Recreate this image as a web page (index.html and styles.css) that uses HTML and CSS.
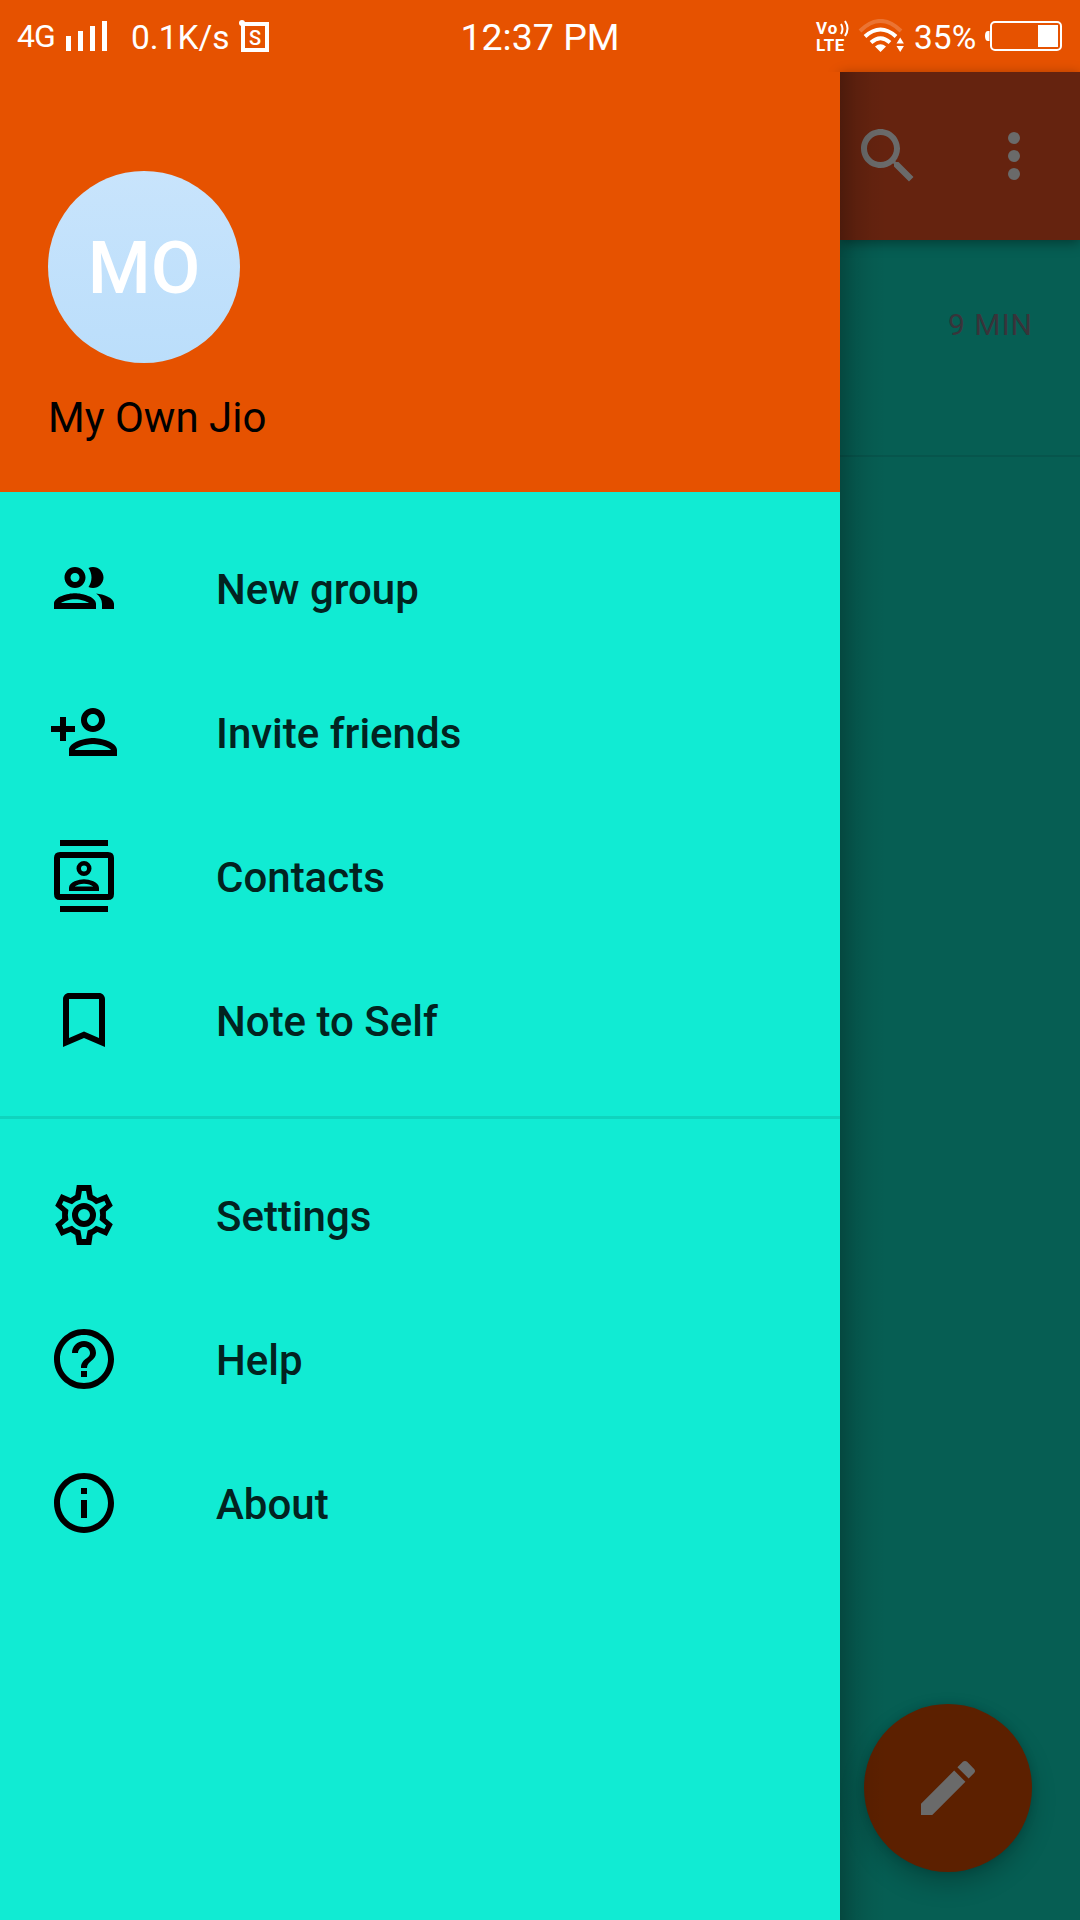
FILE: index.html
```html
<!DOCTYPE html>
<html lang="en">
<head>
<meta charset="utf-8">
<title>Messages</title>
<link rel="stylesheet" href="styles.css">
</head>
<body>
<div class="screen">
  <header class="status">
    <div class="status-left">
      <span class="network">4G</span>
      <svg class="signal" width="42" height="30" viewBox="0 0 42 30"><path d="M0 15h5v15H0zM12 10h5v20h-5zM24 5h5v25h-5zM36 0h5v30h-5z"/></svg>
      <span class="speed">0.1K/s</span>
      <svg class="sim" width="30" height="32" viewBox="0 0 30 32"><path fill-rule="evenodd" d="M2 2h28v30H2zM6 6v22h20V6z"/><circle cx="3" cy="3" r="3"/><text x="16" y="24.500" text-anchor="middle" font-size="20" font-weight="500">S</text></svg>
    </div>
    <span class="clock">12:37 PM</span>
    <div class="status-right">
      <div class="volte">
        <div class="volte-row"><span>Vo</span><svg width="9" height="17" viewBox="0 0 9 17"><path fill="none" stroke="#fff" stroke-width="2" d="M1 4q3 5 0 10M5 1q5 7.500 0 15"/></svg></div>
        <div class="volte-lte">LTE</div>
      </div>
      <svg class="wifi" width="46" height="34" viewBox="0 0 46 34"><g fill="none" stroke="#fff"><path d="M2 12Q22.500-8 43 12" stroke-width="4" opacity=".2"/><path d="M7 17.500Q22.500 3.500 38 17.500" stroke-width="4"/><path d="M13 23.500Q22.500 15 32 23.500" stroke-width="4"/></g><path d="M17 27.500q5.500-4.500 11 0l-5.500 5.500zM38.500 24.500l3.700-6 3.700 6zM38.500 27h7.400l-3.700 6z"/></svg>
      <span class="percent">35%</span>
      <svg class="battery" width="78" height="30" viewBox="0 0 78 30"><path d="M4.500 10H3q-3 0-3 5t3 5h1.500z"/><rect x="6" y="1" width="70" height="28" rx="4" fill="none" stroke="#fff" stroke-width="2"/><path d="M53 4h20v22H53z"/></svg>
    </div>
  </header>
  <main class="body">
    <aside class="drawer">
      <div class="profile">
        <div class="avatar">MO</div>
        <div class="name">My Own Jio</div>
      </div>
      <nav>
        <ul class="menu">
          <li><svg class="icon" viewBox="0 0 24 24"><path d="M9 13.750c-2.340 0-7 1.170-7 3.500V19h14v-1.750c0-2.330-4.660-3.500-7-3.500zM4.340 17c.84-.58 2.870-1.250 4.660-1.250s3.820.67 4.660 1.250H4.340zM9 12c1.930 0 3.500-1.570 3.500-3.500S10.930 5 9 5 5.500 6.570 5.500 8.500 7.070 12 9 12zm0-5c.83 0 1.500.67 1.500 1.500S9.830 10 9 10s-1.500-.67-1.500-1.500S8.170 7 9 7zm7.040 6.810c1.160.84 1.960 1.960 1.960 3.440V19h4v-1.750c0-2.020-3.500-3.170-5.960-3.440zM15 12c1.930 0 3.500-1.570 3.500-3.500S16.930 5 15 5c-.54 0-1.040.13-1.500.35.63.89 1 1.980 1 3.150s-.37 2.260-1 3.150c.46.22.96.35 1.500.35z"/></svg><span>New group</span></li>
          <li><svg class="icon" viewBox="0 0 24 24"><path d="M15 12c2.210 0 4-1.790 4-4s-1.790-4-4-4-4 1.790-4 4 1.790 4 4 4zm0-6c1.100 0 2 .9 2 2s-.9 2-2 2-2-.9-2-2 .9-2 2-2zm0 8c-2.670 0-8 1.340-8 4v2h16v-2c0-2.660-5.330-4-8-4zm-6 4c.22-.72 3.310-2 6-2 2.700 0 5.800 1.290 6 2H9zm-3-3v-3h3v-2H6V7H4v3H1v2h3v3z"/></svg><span>Invite friends</span></li>
          <li><svg class="icon" viewBox="0 0 24 24"><path fill-rule="evenodd" d="M4 0h16v2H4zM4 22h16v2H4zM4 4h16q2 0 2 2v12q0 2-2 2H4q-2 0-2-2V6q0-2 2-2zM4 6v12h16V6zM12 7a2.500 2.500 0 1 0 0 5 2.500 2.500 0 0 0 0-5zm0 1.500a1 1 0 1 1 0 2 1 1 0 0 1 0-2zM7 17v-1c0-2 3.300-2.900 5-2.900s5 .9 5 2.900v1zm1.900-1.500h6.200c-.7-.5-1.900-.9-3.100-.9s-2.400.4-3.100.9z"/></svg><span>Contacts</span></li>
          <li><svg class="icon" viewBox="0 0 24 24"><path d="M17 3H7c-1.100 0-1.990.9-1.990 2L5 21l7-3 7 3V5c0-1.100-.9-2-2-2zm0 15l-5-2.180L7 18V5h10v13z"/></svg><span>Note to Self</span></li>
        </ul>
        <ul class="menu menu-secondary">
          <li><svg class="icon" viewBox="-12 -12 24 24"><path fill-rule="evenodd" d="M-2.400-10H2.400L2.900-6.700 4.500-5.700 7.600-7 9.600-3.100 7.300-1.200V1.200L9.600 3.100 7.600 7 4.500 5.700 2.900 6.700 2.400 10H-2.400L-2.900 6.700-4.500 5.700-7.600 7-9.600 3.100-7.300 1.200V-1.200L-9.600-3.100-7.600-7-4.500-5.700-2.900-6.700zM-.7-8L-1.200-5.200Q-2.800-4.800-4-3.600L-6.800-4.700-7.400-3.500-5.200-1.700Q-5.600 0-5.200 1.700L-7.400 3.500-6.800 4.700-4 3.600Q-2.800 4.800-1.200 5.200L-.7 8H.7L1.200 5.200Q2.800 4.800 4 3.600L6.800 4.700 7.400 3.500 5.200 1.700Q5.600 0 5.200-1.700L7.400-3.500 6.800-4.700 4-3.600Q2.800-4.800 1.200-5.200L.7-8z"/><circle r="3" fill="none" stroke="#000" stroke-width="2"/></svg><span>Settings</span></li>
          <li><svg class="icon" viewBox="0 0 24 24"><path d="M11 18h2v-2h-2v2zm1-16C6.480 2 2 6.480 2 12s4.480 10 10 10 10-4.480 10-10S17.520 2 12 2zm0 18c-4.410 0-8-3.590-8-8s3.590-8 8-8 8 3.590 8 8-3.590 8-8 8zm0-14c-2.210 0-4 1.790-4 4h2c0-1.100.9-2 2-2s2 .9 2 2c0 2-3 1.750-3 5h2c0-2.250 3-2.500 3-5 0-2.210-1.790-4-4-4z"/></svg><span>Help</span></li>
          <li><svg class="icon" viewBox="0 0 24 24"><path d="M11 7h2v2h-2zm0 4h2v6h-2zm1-9C6.480 2 2 6.480 2 12s4.480 10 10 10 10-4.480 10-10S17.520 2 12 2zm0 18c-4.410 0-8-3.590-8-8s3.590-8 8-8 8 3.590 8 8-3.590 8-8 8z"/></svg><span>About</span></li>
        </ul>
      </nav>
    </aside>
    <section class="app">
      <div class="toolbar">
        <svg class="icon" viewBox="0 0 24 24"><path d="M15.500 14h-.79l-.28-.27C15.410 12.590 16 11.110 16 9.500 16 5.910 13.090 3 9.500 3S3 5.910 3 9.500 5.910 16 9.500 16c1.610 0 3.090-.59 4.230-1.570l.27.28v.79l5 4.990L20.490 19l-4.990-5zm-6 0C7.010 14 5 11.990 5 9.500S7.010 5 9.500 5 14 7.010 14 9.500 11.990 14 9.500 14z"/></svg>
        <svg class="icon" viewBox="0 0 24 24"><circle cx="12" cy="6" r="2"/><circle cx="12" cy="12" r="2"/><circle cx="12" cy="18" r="2"/></svg>
      </div>
      <div class="conversation"><span class="time">9 MIN</span></div>
      <div class="fab"><svg class="icon" viewBox="0 0 24 24"><path d="M3 17.250V21h3.750L17.810 9.940l-3.750-3.750L3 17.250zM20.710 7.040c.39-.39.39-1.020 0-1.410l-2.340-2.340c-.39-.39-1.020-.39-1.410 0l-1.830 1.830 3.750 3.750 1.830-1.830z"/></svg></div>
    </section>
  </main>
</div>
</body>
</html>
```
FILE: styles.css
```css
* { box-sizing: border-box; }
body { margin: 0; font-family: Roboto, "Liberation Sans", sans-serif; }
.screen { width: 1080px; height: 1920px; display: flex; flex-direction: column; overflow: hidden; }

.status {
  height: 72px;
  padding: 0 17px;
  display: grid;
  grid-template-columns: 1fr auto 1fr;
  background: #e65200;
  color: #fff;
  line-height: 1;
}
.status svg { fill: #fff; flex: none; }
.status-left, .status-right { display: flex; align-items: flex-start; }
.status-right { justify-content: flex-end; }
.network { font-size: 32px; width: 49px; letter-spacing: -1px; margin-top: 20px; }
.signal { margin-top: 21px; }
.speed { font-size: 33.500px; width: 108px; margin: 21px 0 0 23px; white-space: nowrap; }
.sim { margin-top: 20px; }
.clock { font-size: 37.500px; margin-top: 19px; }
.volte { width: 32px; margin: 20px 10px 0 0; font-weight: 700; font-size: 17px; }
.volte-row { display: flex; gap: 2px; height: 17px; line-height: 17px; letter-spacing: 1px; }
.volte-lte { line-height: 17px; letter-spacing: 0.500px; }
.wifi { margin: 19px 10px 0 0; }
.percent { font-size: 33.500px; width: 61px; margin: 21px 10px 0 0; }
.battery { margin-top: 21px; }

.body { flex: 1; display: flex; }
.drawer { position: relative; z-index: 1; width: 840px; background: #11ebd3; }
.profile { height: 420px; padding: 99px 48px 0; background: #e65200; }
.avatar {
  width: 192px;
  height: 192px;
  border-radius: 50%;
  background: linear-gradient(#c8e4fc, #bbdefb);
  color: #fff;
  font-size: 72px;
  font-weight: 500;
  line-height: 195px;
  text-align: center;
}
.name { margin-top: 30px; font-size: 42px; line-height: 50px; color: #000; }

.menu { list-style: none; margin: 0; padding: 24px 0; }
.menu-secondary { border-top: 3px solid #0fd4be; }
.menu li {
  height: 144px;
  padding-left: 48px;
  display: flex;
  align-items: center;
  gap: 96px;
  font-size: 42px;
  font-weight: 500;
  color: #022320;
}
.menu span { padding-top: 3px; }
.icon { width: 72px; height: 72px; flex: none; display: block; }

.app { position: relative; width: 240px; display: flex; flex-direction: column; background: #065e53; }
/* Shadow cast by the open drawer */
.app::after {
  content: "";
  position: absolute;
  inset: 0;
  background: linear-gradient(90deg, rgba(0,0,0,.24), rgba(0,0,0,.1) 16px, rgba(0,0,0,.03) 32px, transparent 46px);
}
.app .icon { fill: #6a6a6a; }
.toolbar {
  height: 168px;
  padding: 0 30px 0 12px;
  display: flex;
  align-items: center;
  justify-content: space-between;
  background: #65230f;
  box-shadow: 0 3px 12px rgba(0,0,0,.38);
}
.conversation {
  height: 217px;
  padding: 67px 47px 0 0;
  border-bottom: 2px solid #06554c;
  text-align: right;
  font-size: 30px;
  line-height: 36px;
  letter-spacing: 1px;
  color: #38343a;
}
.fab {
  width: 168px;
  height: 168px;
  margin: auto 48px 48px 24px;
  border-radius: 50%;
  display: flex;
  align-items: center;
  justify-content: center;
  background: #5c2000;
  box-shadow: 0 12px 24px rgba(0,0,0,.22), 0 0 8px rgba(0,0,0,.15);
}
```
